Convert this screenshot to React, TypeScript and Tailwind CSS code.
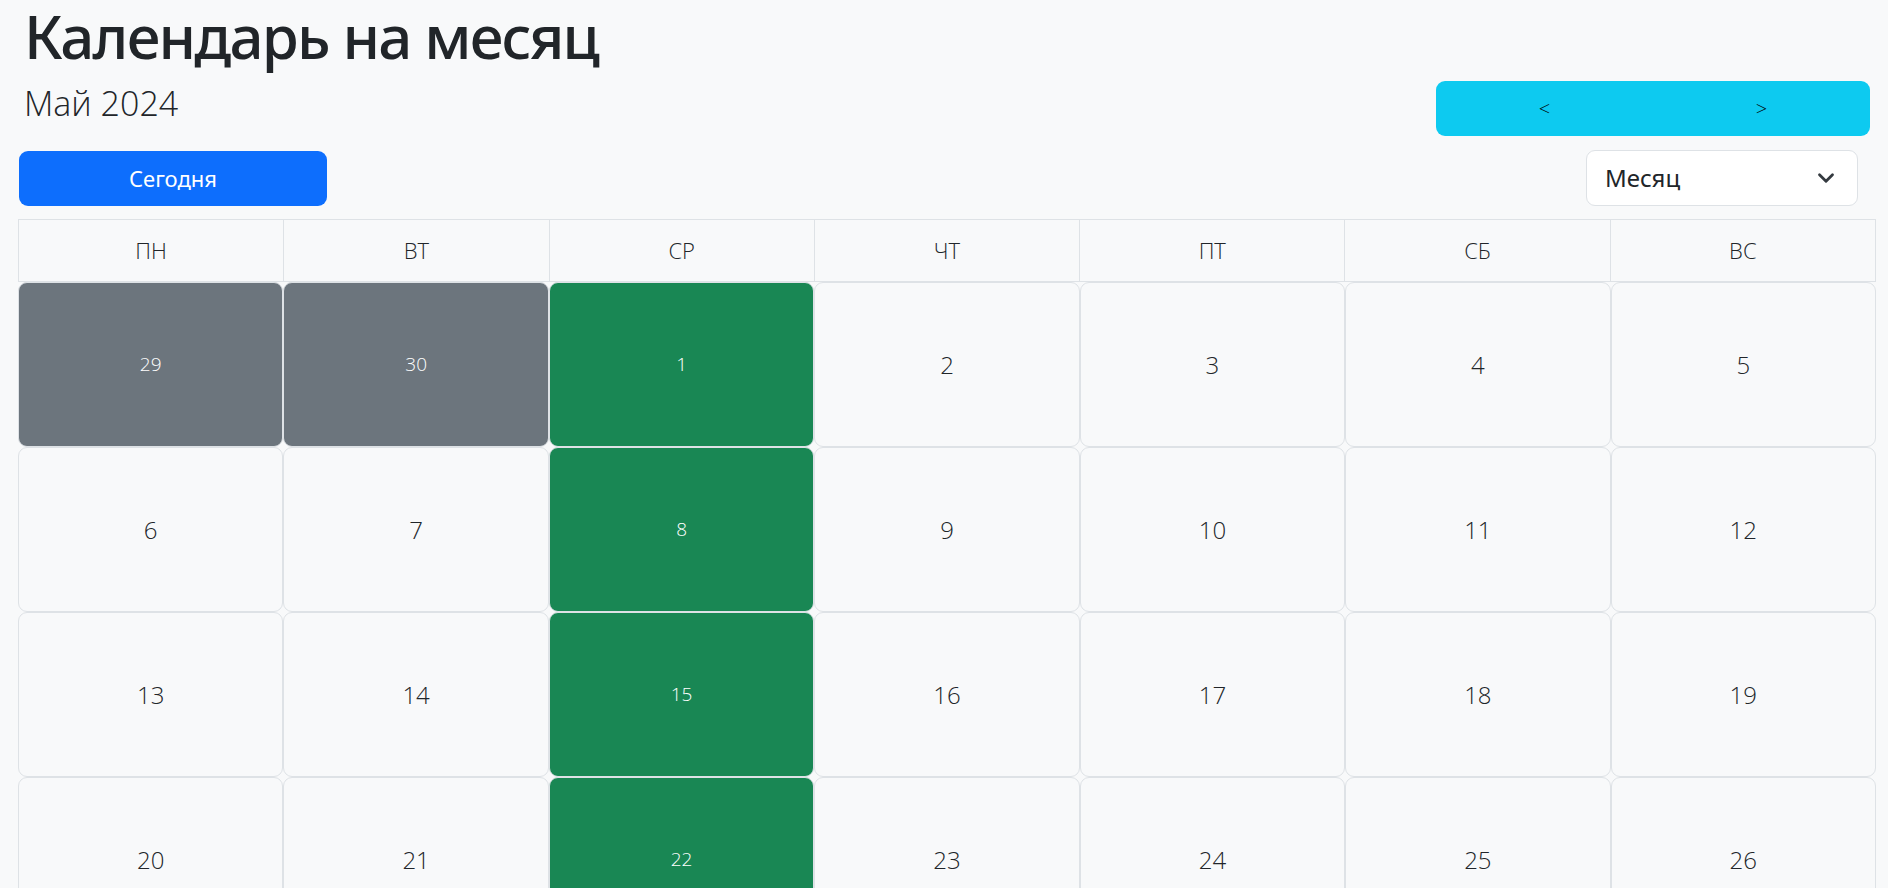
import { ChevronDown } from 'lucide-react';

const weekDays = ['ПН', 'ВТ', 'СР', 'ЧТ', 'ПТ', 'СБ', 'ВС'];

type Day = { n: number; kind: 'muted' | 'marked' | 'plain' };

const weeks: Day[][] = [
  [29, 30, 1, 2, 3, 4, 5],
  [6, 7, 8, 9, 10, 11, 12],
  [13, 14, 15, 16, 17, 18, 19],
  [20, 21, 22, 23, 24, 25, 26],
  [27, 28, 29, 30, 31, 1, 2],
].map((row, r) =>
  row.map((n, c) => ({
    n,
    kind: (r === 0 && c < 2) || (r === 4 && c > 4) ? 'muted' : c === 2 ? 'marked' : 'plain',
  }))
);

function DayCell({ day }: { day: Day }) {
  if (day.kind === 'muted') {
    return (
      <button className="h-[165px] rounded-[9px] border border-[#dee2e6] bg-[#6c757d] font-['Open_Sans',sans-serif] text-[19px] font-light text-white">
        {day.n}
      </button>
    );
  }
  if (day.kind === 'marked') {
    return (
      <button className="h-[165px] rounded-[9px] border border-[#dee2e6] bg-[#198754] font-['Open_Sans',sans-serif] text-[19px] font-light text-white">
        {day.n}
      </button>
    );
  }
  return (
    <button className="h-[165px] rounded-[9px] border border-[#dee2e6] bg-[#f8f9fa] font-['Open_Sans',sans-serif] text-[24px] font-light text-[#212529]">
      {day.n}
    </button>
  );
}

export default function App() {
  return (
    <div className="min-h-screen bg-[#f8f9fa] pl-[18px] pr-[12px] text-[#212529] font-['Noto_Sans','Open_Sans',sans-serif]">
      {/* Header */}
      <div className="flex items-start justify-between">
        <div className="pl-[6px]">
          <h1 className="text-[60px] font-medium leading-[72px] tracking-[-1.8px]">Календарь на месяц</h1>
          <h4 className="mt-[11px] font-['Open_Sans',sans-serif] text-[34px] font-light leading-[41px]">Май 2024</h4>
        </div>
        <div className="mt-[81px] mr-[6px] flex h-[55px] w-[434px] overflow-hidden rounded-[9px] bg-[#0dcaf0]">
          <button className="flex-1 font-['Open_Sans',sans-serif] text-[20px] font-light text-black">&lt;</button>
          <button className="flex-1 font-['Open_Sans',sans-serif] text-[20px] font-light text-black">&gt;</button>
        </div>
      </div>

      {/* Controls */}
      <div className="mt-[14px] flex items-center justify-between">
        <button className="ml-[1px] h-[55px] w-[308px] rounded-[9px] bg-[#0d6efd] text-[22px] text-white">
          Сегодня
        </button>
        <div className="mr-[18px] flex h-[56px] w-[272px] items-center justify-between rounded-[9px] border border-[#dee2e6] bg-white pl-[18px] pr-[18px]">
          <span className="text-[24px]">Месяц</span>
          <ChevronDown className="h-[26px] w-[26px] text-[#343a40]" strokeWidth={2.6} />
        </div>
      </div>

      {/* Calendar */}
      <div className="mt-[13px] w-[1858px]">
        <div className="grid grid-cols-7 border-l border-t border-[#dee2e6]">
          {weekDays.map((d) => (
            <div
              key={d}
              className="flex h-[62px] items-center justify-center border-b border-r border-[#dee2e6] font-['Open_Sans',sans-serif] text-[22px] font-light"
            >
              {d}
            </div>
          ))}
        </div>
        <div className="grid grid-cols-7">
          {weeks.flat().map((day, i) => (
            <DayCell key={i} day={day} />
          ))}
        </div>
      </div>
    </div>
  );
}
